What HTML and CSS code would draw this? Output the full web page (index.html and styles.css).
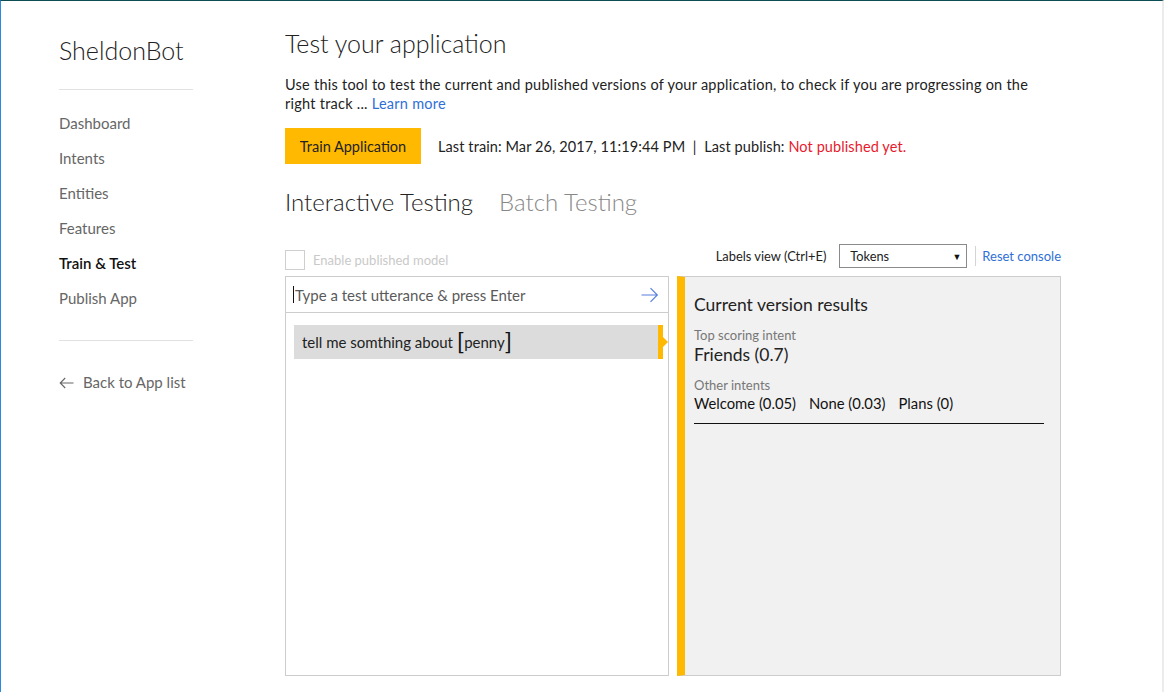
FILE: index.html
```html
<!DOCTYPE html>
<html lang="en">
<head>
<meta charset="utf-8">
<title>SheldonBot - Train &amp; Test</title>
<link rel="stylesheet" href="styles.css">
</head>
<body>
<div class="frame">
  <aside class="sidebar">
    <div class="app-name">SheldonBot</div>
    <hr class="side-rule">
    <nav class="nav">
      <a class="nav-item">Dashboard</a>
      <a class="nav-item">Intents</a>
      <a class="nav-item">Entities</a>
      <a class="nav-item">Features</a>
      <a class="nav-item active">Train &amp; Test</a>
      <a class="nav-item">Publish App</a>
    </nav>
    <hr class="side-rule rule-2">
    <a class="back-link">
      <svg class="back-icon" width="15" height="12" viewBox="0 0 15 12"><path d="M14.5 6H1.2M6.2 1L1.2 6l5 5" fill="none" stroke="#666" stroke-width="1.1"/></svg>
      <span>Back to App list</span>
    </a>
  </aside>

  <main class="main">
    <h1 class="page-title">Test your application</h1>
    <p class="intro"><span>Use this tool to test the current and published versions of your application, to check if you are progressing on the right track ...</span> <a class="link">Learn more</a></p>

    <div class="train-row">
      <button class="train-btn">Train Application</button>
      <span class="train-info">Last train: Mar 26, 2017, 11:19:44 PM &nbsp;|&nbsp; Last publish: <span class="not-published">Not published yet.</span></span>
    </div>

    <div class="tabs">
      <span class="tab active">Interactive Testing</span>
      <span class="tab">Batch Testing</span>
    </div>

    <div class="controls">
      <label class="enable">
        <span class="checkbox"></span>
        <span class="enable-text">Enable published model</span>
      </label>
      <div class="labels-view">
        <span class="labels-text">Labels view (Ctrl+E)</span>
        <div class="select"><span>Tokens</span><span class="caret">&#9660;</span></div>
        <span class="sep"></span>
        <a class="link reset">Reset console</a>
      </div>
    </div>

    <div class="panels">
      <section class="console">
        <div class="input-row">
          <span class="cursor"></span>
          <span class="placeholder">Type a test utterance &amp; press Enter</span>
          <svg class="send" width="18" height="16" viewBox="0 0 18 16"><path d="M0.5 8H16.5M9.5 1.2L16.3 8l-6.8 6.8" fill="none" stroke="#5a7fe0" stroke-width="1.2"/></svg>
        </div>
        <div class="utterances">
          <div class="utterance">
            <span class="utt-text">tell me somthing about <span class="br">[</span>penny<span class="br">]</span></span>
            <span class="utt-marker"></span>
          </div>
        </div>
      </section>

      <section class="results">
        <div class="results-title">Current version results</div>
        <div class="label">Top scoring intent</div>
        <div class="top-intent">Friends (0.7)</div>
        <div class="label other">Other intents</div>
        <div class="others"><span>Welcome (0.05)</span><span>None (0.03)</span><span>Plans (0)</span></div>
        <hr class="results-rule">
      </section>
    </div>
  </main>
</div>
</body>
</html>
```

FILE: styles.css
```css
* { box-sizing: border-box; }
html, body { margin: 0; padding: 0; }
body {
  width: 1164px;
  height: 692px;
  overflow: hidden;
  background: #fff;
  font-family: "Lato", "Open Sans", "Liberation Sans", sans-serif;
  color: #222;
}
.frame {
  display: flex;
  height: 692px;
  border-top: 1px solid #0c4e52;
  border-left: 1px solid #2a8ae0;
  border-right: 2px solid #ececec;
}
.sidebar {
  width: 192px;
  padding-left: 58px;
  padding-top: 33px;
  flex: none;
}
.app-name {
  font-size: 25px;
  font-weight: 300;
  line-height: 32px;
  color: #222;
  white-space: nowrap;
}
.side-rule {
  border: 0;
  border-top: 1px solid #e1e1e1;
  margin: 23px 0 16px;
  width: 134px;
}
.rule-2 { margin: 24px 0 24px; }
.nav { display: flex; flex-direction: column; }
.nav-item {
  font-size: 15px;
  line-height: 35px;
  color: #666;
}
.nav-item.active { color: #111; font-weight: 600; }
.back-link {
  display: flex;
  align-items: center;
  gap: 9px;
  font-size: 15px;
  line-height: 35px;
  color: #666;
  white-space: nowrap;
}
.main {
  width: 776px;
  margin-left: 92px;
  padding-top: 26px;
}
.page-title {
  margin: 0;
  font-size: 25px;
  font-weight: 300;
  line-height: 32px;
  color: #222;
}
.intro {
  margin: 16px 0 0;
  font-size: 14.5px;
  letter-spacing: 0.25px;
  line-height: 19px;
  color: #222;
  width: 760px;
}
.link { color: #2f6fd8; cursor: pointer; }
.train-row {
  display: flex;
  align-items: center;
  gap: 17px;
  margin-top: 15px;
}
.train-btn {
  background: #ffb900;
  border: 0;
  height: 36px;
  width: 136px;
  padding: 0;
  font-family: inherit;
  font-size: 14.5px;
  color: #222;
}
.train-info { font-size: 14.5px; letter-spacing: 0.1px; color: #222; }
.not-published { color: #e8192c; }
.tabs {
  display: flex;
  gap: 26px;
  margin-top: 22px;
}
.tab {
  font-size: 24px;
  font-weight: 300;
  line-height: 32px;
  color: #888;
}
.tab.active { color: #222; }
.controls {
  display: flex;
  justify-content: space-between;
  align-items: flex-end;
  margin-top: 26px;
  height: 24px;
}
.enable {
  display: flex;
  align-items: center;
  gap: 8px;
  position: relative;
  top: 2px;
}
.checkbox {
  width: 20px;
  height: 20px;
  border: 1px solid #cfcfcf;
  background: #fff;
}
.enable-text { font-size: 13px; color: #c9c9c9; }
.labels-view {
  display: flex;
  align-items: center;
  height: 24px;
}
.labels-text { font-size: 12.9px; color: #222; margin-right: 13px; }
.select {
  width: 128px;
  height: 24px;
  border: 1px solid #8a8a8a;
  display: flex;
  align-items: center;
  justify-content: space-between;
  padding: 0 5px 0 10px;
  font-size: 12.8px;
  color: #222;
}
.caret { font-size: 9px; color: #111; }
.sep {
  width: 1px;
  height: 20px;
  background: #d4d4d4;
  margin: 0 6px 0 8px;
}
.reset { font-size: 13px; }
.panels {
  display: grid;
  grid-template-columns: 384px 384px;
  gap: 8px;
  margin-top: 8px;
  height: 400px;
}
.console {
  border: 1px solid #cdcdcd;
  background: #fff;
}
.input-row {
  height: 36px;
  border-bottom: 1px solid #cdcdcd;
  display: flex;
  align-items: center;
  padding: 0 9px 0 7px;
}
.cursor {
  width: 1px;
  height: 17px;
  background: #111;
  margin-right: 1px;
}
.placeholder { font-size: 15px; color: #5a5a5a; flex: 1; }
.send { flex: none; }
.utterances { padding: 12px 5px 0 8px; }
.utterance {
  display: flex;
  align-items: stretch;
  height: 34px;
  background: #dcdcdc;
}
.utt-text {
  flex: 1;
  font-size: 15px;
  padding-left: 8px;
  display: flex;
  align-items: center;
  color: #222;
  white-space: pre;
}
.br { font-size: 24px; font-weight: 400; line-height: 1; position: relative; top: -1px; color: #111; }
.utt-marker {
  width: 5px;
  background: #ffb900;
  position: relative;
}
.utt-marker::after {
  content: "";
  position: absolute;
  left: 5px;
  top: 12px;
  border-left: 5px solid #ffb900;
  border-top: 5px solid transparent;
  border-bottom: 5px solid transparent;
}
.results {
  background: #f1f1f1;
  border: 1px solid #cdcdcd;
  border-left: 8px solid #ffb900;
  padding: 16px 16px 0 9px;
}
.results-title {
  font-size: 17.5px;
  line-height: 24px;
  color: #222;
}
.label {
  font-size: 13px;
  line-height: 16px;
  color: #777;
  margin-top: 10px;
}
.label.other { margin-top: 11px; }
.top-intent {
  font-size: 17.5px;
  line-height: 22px;
  color: #222;
  margin-top: 1px;
}
.others {
  display: flex;
  gap: 13px;
  font-size: 14.8px;
  line-height: 20px;
  color: #111;
}
.results-rule {
  border: 0;
  border-top: 1px solid #111;
  margin: 10px 0 0;
}
```
